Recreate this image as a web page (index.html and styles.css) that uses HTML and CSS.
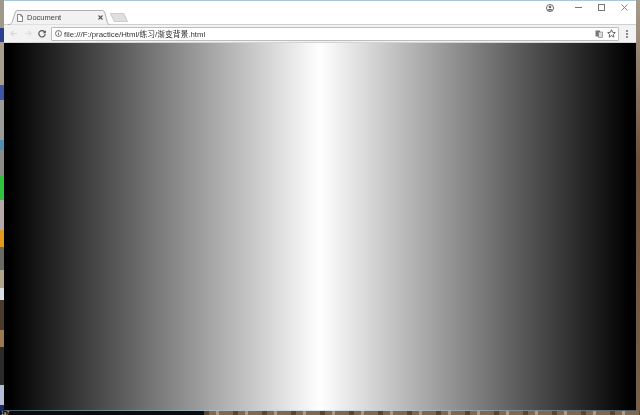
FILE: index.html
```html
<!DOCTYPE html>
<html lang="zh-CN">
<head>
  <meta charset="UTF-8">
  <title>Document</title>
  <link rel="stylesheet" href="styles.css">
</head>
<body>
  <div class="desktop">
    <!-- Wallpaper strip on the left -->
    <div class="strip-left"></div>

    <!-- Browser window -->
    <div class="window">
      <div class="titlebar">
        <div class="tab">
          <svg class="tab-shape" width="102" height="15" viewBox="0 0 102 15">
            <path d="M0 14.5H1C3 14.5 4 13 4.5 11L7 3C7.5 1 8.5 .5 10 .5H94C95.5 .5 96 1 97 3L99 11C99.5 13 100 14.5 102 14.5" fill="#f2f2f2" stroke="#b0b0b0"/>
          </svg>
          <svg class="doc-icon" width="6" height="8" viewBox="0 0 6 8">
            <path d="M.5 .5H3.8L5.5 2.2V7.5H.5ZM3.8 .5V2.2H5.5" fill="#fff" stroke="#666" stroke-width=".8"/>
          </svg>
          <span class="tab-title">Document</span>
          <svg class="tab-close" width="5" height="5" viewBox="0 0 5 5">
            <path d="M.5 .5L4.5 4.5M4.5 .5L.5 4.5" stroke="#555" stroke-width="1.1"/>
          </svg>
        </div>
        <div class="new-tab"></div>
        <div class="win-controls">
          <svg class="profile" width="8" height="8" viewBox="0 0 8 8">
            <circle cx="4" cy="4" r="3.5" fill="#fff" stroke="#666"/>
            <circle cx="4" cy="3" r="1.3" fill="#666"/>
            <path d="M1.5 6.5C2 5 6 5 6.5 6.5" stroke="#666" fill="#666"/>
          </svg>
          <svg class="ctl-min" width="7" height="1" viewBox="0 0 7 1"><path d="M0 .5H7" stroke="#777"/></svg>
          <svg class="ctl-max" width="7" height="7" viewBox="0 0 7 7"><rect x=".5" y=".5" width="6" height="6" fill="none" stroke="#777"/></svg>
          <svg class="ctl-close" width="7" height="7" viewBox="0 0 7 7"><path d="M.5 .5L6.5 6.5M6.5 .5L.5 6.5" stroke="#888"/></svg>
        </div>
      </div>

      <div class="toolbar">
        <svg class="nav-btn" width="7" height="7" viewBox="0 0 7 7"><path d="M7 3.5H1M3.5 1L1 3.5L3.5 6" fill="none" stroke="#d8d8d8" stroke-width="1.1"/></svg>
        <svg class="nav-btn" width="7" height="7" viewBox="0 0 7 7"><path d="M0 3.5H6M3.5 1L6 3.5L3.5 6" fill="none" stroke="#dedede" stroke-width="1.1"/></svg>
        <svg class="nav-btn reload" width="8" height="8" viewBox="0 0 8 8"><path d="M6.8 2.2A3.2 3.2 0 1 0 7.2 4" fill="none" stroke="#555" stroke-width="1.2"/><path d="M7.8 .2V3.2H4.8Z" fill="#555"/></svg>
        <div class="omnibox">
          <svg class="info" width="7" height="7" viewBox="0 0 7 7">
            <circle cx="3.5" cy="3.5" r="3" fill="none" stroke="#555" stroke-width=".8"/>
            <path d="M3.5 3V5.3M3.5 1.6V2.4" stroke="#555" stroke-width=".8"/>
          </svg>
          <span class="url">file:///F:/practice/Html/练习/渐变背景.html</span>
          <svg class="translate" width="8" height="8" viewBox="0 0 8 8">
            <rect x=".5" y=".5" width="4.5" height="6" fill="#777"/>
            <rect x="3.5" y="2" width="4" height="5.5" fill="#ddd" stroke="#777" stroke-width=".6"/>
          </svg>
          <svg class="star" width="9" height="9" viewBox="0 0 9 9">
            <path d="M4.5 .8L5.6 3.3L8.3 3.6L6.3 5.4L6.9 8.1L4.5 6.7L2.1 8.1L2.7 5.4L.7 3.6L3.4 3.3Z" fill="none" stroke="#555" stroke-width=".9"/>
          </svg>
        </div>
        <div class="menu"><b></b><b></b><b></b></div>
      </div>

      <!-- The page itself: the gradient background -->
      <div class="page"></div>
    </div>

    <div class="strip-right"></div>
  </div>

  <!-- Wallpaper along the bottom -->
  <div class="strip-bottom">
    <span class="bottom-label">1a7</span>
    <div class="bottom-wall"></div>
  </div>
</body>
</html>
```
FILE: styles.css
```css
* {
  margin: 0;
  padding: 0;
  box-sizing: border-box;
}

html,
body {
  height: 415px;
  overflow: hidden;
}

body {
  display: flex;
  flex-direction: column;
  background: #111;
  font-family: "Liberation Sans", "Noto Sans CJK SC", sans-serif;
}

.desktop {
  display: flex;
  height: 411px;
}

/* Wallpaper strips */
.strip-left {
  width: 4px;
  background: linear-gradient(
    #a09888 0 28px,
    #2a3f90 28px 42px,
    #a89c8c 42px 85px,
    #3f55a5 85px 100px,
    #9a9a98 100px 140px,
    #4f90b0 140px 150px,
    #8a8a86 150px 175px,
    #2fc23f 175px 200px,
    #b4a8a8 200px 230px,
    #e09a1e 230px 247px,
    #6a6a64 247px 270px,
    #b0a48c 270px 288px,
    #dcdce4 288px 300px,
    #4a3a2c 300px 330px,
    #9a7a50 330px 347px,
    #2a2a28 347px 385px,
    #b4bcd8 385px 405px,
    #1c2a60 405px
  );
}

.strip-right {
  width: 4px;
  background: linear-gradient(#a89c8c, #6b4f3a 40%, #75604c);
}

.strip-bottom {
  height: 4px;
  display: flex;
  background: #0c0c10;
}

.bottom-label {
  width: 204px;
  padding-left: 1px;
  font-size: 5px;
  line-height: 4px;
  color: #ccc;
}

.bottom-wall {
  flex: 1;
  background:
    repeating-linear-gradient(90deg, rgba(60, 40, 25, .55) 0 5px, transparent 5px 12px, rgba(225, 215, 195, .45) 12px 15px, transparent 15px 29px),
    #806850;
}

/* Browser window */
.window {
  flex: 1;
  display: flex;
  flex-direction: column;
  background: #fff;
  border-top: 1px solid #a8c8d8;
}

.titlebar {
  height: 24px;
  display: flex;
  align-items: flex-end;
  padding-left: 4px;
  background: #fff;
  border-bottom: 1px solid #cfcfcf;
  filter: blur(.3px);
}

.tab {
  position: relative;
  width: 102px;
  height: 15px;
  margin-bottom: -1px;
  display: flex;
  align-items: center;
  padding: 0 7px 0 9px;
}

.tab-shape {
  position: absolute;
  left: 0;
  top: 0;
}

.doc-icon,
.tab-title,
.tab-close {
  position: relative;
}

.tab-title {
  margin-left: 4px;
  flex: 1;
  font-size: 7.5px;
  color: #444;
}

.new-tab {
  width: 14px;
  height: 9px;
  margin: 0 0 2px 2px;
  background: #dfdfdf;
  border: 1px solid #cdcdcd;
  transform: skewX(25deg);
}

.win-controls {
  margin-left: auto;
  align-self: flex-start;
  display: flex;
  align-items: center;
  height: 13px;
  padding-right: 8px;
}

.profile { margin-right: 21px; }
.ctl-min { margin-right: 16px; }
.ctl-max { margin-right: 16px; }

/* Toolbar */
.toolbar {
  height: 18px;
  display: flex;
  align-items: center;
  padding: 0 3px 0 6px;
  gap: 8px;
  background: #f2f2f2;
  border-bottom: 1px solid #d4d4d4;
  filter: blur(.3px);
}

.reload {
  margin-left: -2px;
}

.omnibox {
  flex: 1;
  height: 14px;
  margin-left: -3px;
  display: flex;
  align-items: center;
  padding: 0 2px 0 3px;
  background: #fff;
  border: 1px solid #bdbdbd;
  border-radius: 1px;
}

.url {
  flex: 1;
  margin-left: 2px;
  padding-bottom: 1px;
  font-size: 7.8px;
  color: #333;
}

.translate { margin-right: 4px; }

.menu {
  width: 12px;
  margin-left: -6px;
  display: flex;
  flex-direction: column;
  align-items: center;
  gap: 1px;
}

.menu b {
  width: 2px;
  height: 2px;
  border-radius: 50%;
  background: #666;
}

/* Gradient background */
.page {
  flex: 1;
  background: linear-gradient(to right, #000 1%, #fff 50%, #000 99%);
  box-shadow: inset 0 -1px 0 rgba(160, 205, 225, .45);
}
```
